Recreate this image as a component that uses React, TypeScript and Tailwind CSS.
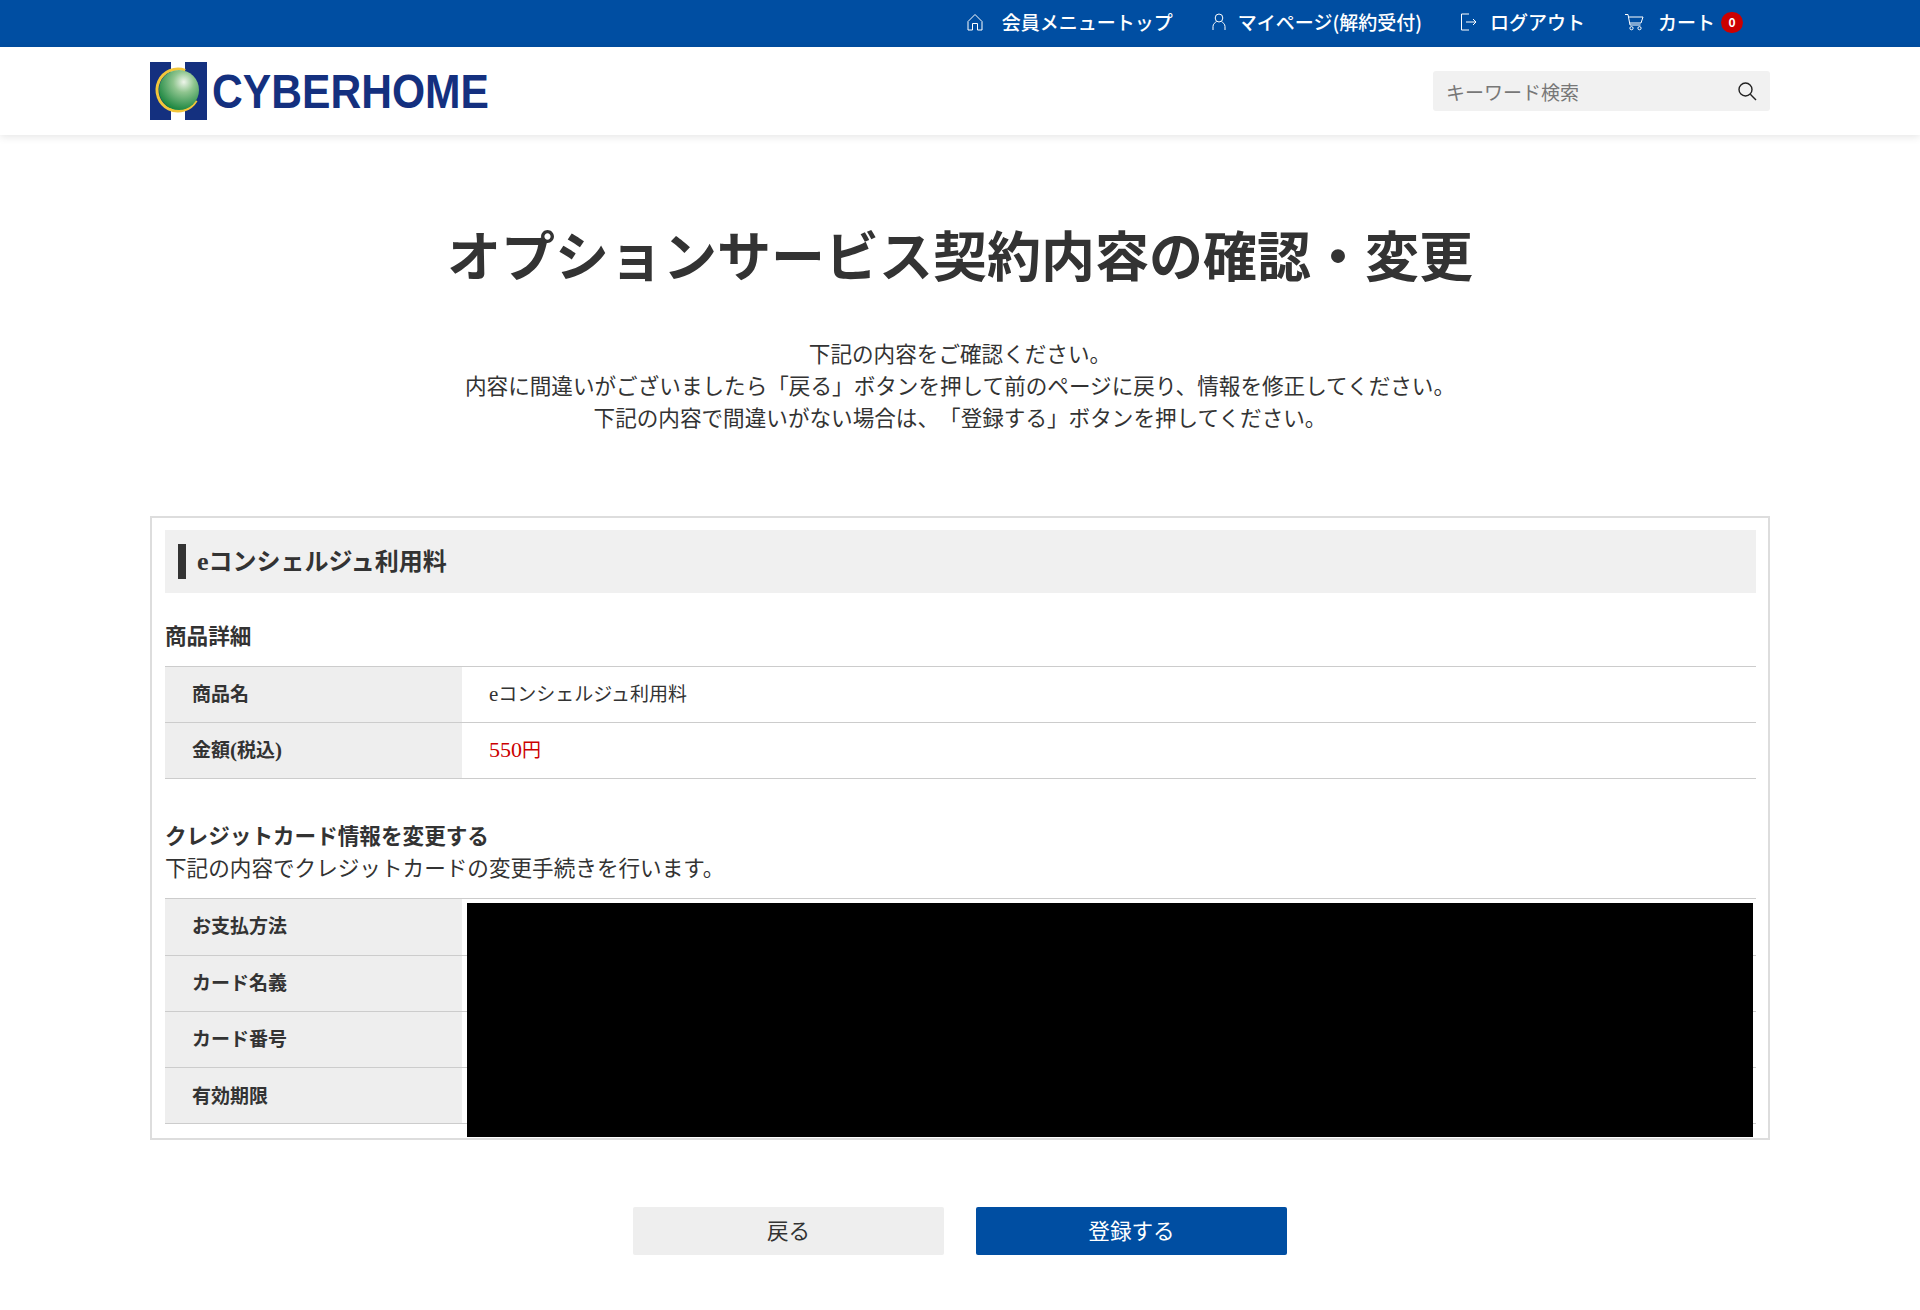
import { FC, ReactNode } from 'react';

const navIconClass = 'shrink-0 fill-none stroke-white stroke-[1]';

const HomeIcon = () => (
  <svg className={navIconClass} width="16" height="18" viewBox="0 0 16 18">
    <path d="M1 8.5 8 1.5l7 7V17h-4.5v-6.5h-5V17H1z" />
  </svg>
);

const UserIcon = () => (
  <svg className={navIconClass} width="14" height="18" viewBox="0 0 14 18">
    <ellipse cx="7" cy="5" rx="3.8" ry="4" />
    <path d="M1 17v-3.5C1 11 3 9.6 4.5 8.6M13 17v-3.5c0-2.5-2-3.9-3.5-4.9" />
  </svg>
);

const LogoutIcon = () => (
  <svg className={navIconClass} width="17" height="18" viewBox="0 0 17 18">
    <path d="M9 1H1.5v16H9M6 9h10M13 6l3 3-3 3" />
  </svg>
);

const CartIcon = () => (
  <svg className={navIconClass} width="20" height="18" viewBox="0 0 20 18">
    <path d="M1 1.5h3l2 10.5h10.5M4.5 4H19l-2 6H5.7" />
    <circle cx="7.5" cy="15.2" r="1.6" />
    <circle cx="15.5" cy="15.2" r="1.6" />
  </svg>
);

const Logo = () => (
  <svg className="overflow-visible" width="339" height="58" viewBox="0 0 339 58" role="img" aria-label="CYBERHOME">
    <defs>
      <radialGradient id="ball" cx="0.62" cy="0.3" r="0.75">
        <stop offset="0" stopColor="#eef5ea" />
        <stop offset="0.35" stopColor="#8fc58f" />
        <stop offset="1" stopColor="#12813a" />
      </radialGradient>
    </defs>
    <path d="M0 0h21v14h14V0h22v58H35V44H21v14H0z" fill="#14307f" />
    <path d="M35.2 8.3A21 21 0 1 0 46.2 38.5" fill="none" stroke="#f3c63a" strokeWidth="3" />
    <circle cx="29" cy="28" r="20" fill="url(#ball)" />
    <text
      x="62"
      y="46"
      textLength="277"
      lengthAdjust="spacingAndGlyphs"
      fontFamily="'Liberation Sans', sans-serif"
      fontWeight="700"
      fontSize="49"
      fill="#14307f"
    >
      CYBERHOME
    </text>
  </svg>
);

const NavItem: FC<{ icon: ReactNode; label: string; gap: string; className?: string }> = ({
  icon,
  label,
  gap,
  className,
}) => (
  <a className={`flex items-center ${gap} ${className ?? ''}`}>
    {icon}
    <span>{label}</span>
  </a>
);

const Row: FC<{ label: ReactNode; height?: string; children?: ReactNode }> = ({
  label,
  height = 'h-14',
  children,
}) => (
  <div className={`flex border-b border-[#cccccc] ${height}`}>
    <div className="flex w-[297px] shrink-0 items-center bg-[#eeeeee] pl-[27px] text-[19px] font-bold">{label}</div>
    <div className="flex flex-1 items-center pl-[27px] text-[19px]">{children}</div>
  </div>
);

export default function App() {
  return (
    <div className="min-h-[1310px] bg-white text-[21.6px] leading-[32px] text-[#333333] [text-spacing-trim:space-all] [font-family:'Liberation_Serif','Noto_Sans_CJK_JP',serif]">
      <div className="flex h-[47px] items-center justify-end bg-[#004ea2] pb-[3px] pr-[177px] text-[19px] font-medium text-white [font-family:'Noto_Sans_CJK_JP',sans-serif]">
        <NavItem icon={<HomeIcon />} label="会員メニュートップ" gap="gap-[19px]" className="mr-[39px]" />
        <NavItem icon={<UserIcon />} label="マイページ(解約受付)" gap="gap-3" className="mr-[38px]" />
        <NavItem icon={<LogoutIcon />} label="ログアウト" gap="gap-[13px]" className="mr-[39px]" />
        <NavItem icon={<CartIcon />} label="カート" gap="gap-[14px]" />
        <span className="ml-1.5 flex h-[21px] w-[22px] items-center justify-center rounded-full bg-[#cc0000] text-[12px] font-bold leading-none">
          0
        </span>
      </div>

      <header className="relative flex h-[88px] items-center justify-between px-[150px] shadow-[0_2px_8px_rgba(0,0,0,0.1)]">
        <Logo />
        <div className="flex h-10 w-[337px] items-center justify-between rounded-[3px] bg-[#f1f1f1] pl-[13px] pr-[13px] [font-family:'Noto_Sans_CJK_JP',sans-serif]">
          <span className="pt-px text-[19px] text-[#777777]">キーワード検索</span>
          <svg className="fill-none stroke-[#222222] stroke-[1.4]" width="20" height="20" viewBox="0 0 20 20">
            <circle cx="8.5" cy="8.5" r="6.5" />
            <path d="m13.3 13.3 5.7 5.7" />
          </svg>
        </div>
      </header>

      <main className="px-[150px] [font-family:'Noto_Sans_CJK_JP',sans-serif]">
        <h1 className="mt-[80px] text-center text-[54px] font-bold leading-[78px]">
          オプションサービス契約内容の確認・変更
        </h1>
        <div className="mt-[44px] text-center">
          <p>下記の内容をご確認ください。</p>
          <p>内容に間違いがございましたら「戻る」ボタンを押して前のページに戻り、情報を修正してください。</p>
          <p>下記の内容で間違いがない場合は、「登録する」ボタンを押してください。</p>
        </div>

        <section className="mt-[83px] h-[624px] border-2 border-[#dddddd] pl-[13px] pr-3 pt-3 [font-family:'Liberation_Serif','Noto_Sans_CJK_JP',serif]">
          <h2 className="flex h-[63px] items-center bg-[#f0f0f0] pl-[13px] text-[24px] font-bold">
            <span className="mr-[11px] h-[35px] w-2 bg-[#333333]" />
            <span>
              <span className="text-[26px]">e</span>コンシェルジュ利用料
            </span>
          </h2>
          <h3 className="mt-[28px] text-[21.6px] font-bold leading-[32px]">商品詳細</h3>
          <div className="mt-[13px] border-t border-[#cccccc]">
            <Row label="商品名">
              <span>
                <span className="text-[21px]">e</span>コンシェルジュ利用料
              </span>
            </Row>
            <Row
              label={
                <span>
                  金額<span className="text-[21px]">(</span>税込<span className="text-[21px]">)</span>
                </span>
              }
            >
              <span className="text-[#cc0000]">
                <span className="text-[22px]">550</span>円
              </span>
            </Row>
          </div>
          <h3 className="mt-[42px] text-[21.6px] font-bold leading-[32px]">クレジットカード情報を変更する</h3>
          <p className="-mt-0.5 [font-family:'Noto_Sans_CJK_JP',sans-serif]">
            下記の内容でクレジットカードの変更手続きを行います。
          </p>
          <div className="relative mt-[15px] border-t border-[#cccccc]">
            <Row label="お支払方法" height="h-[57px]" />
            <Row label="カード名義" />
            <Row label="カード番号" />
            <Row label={<span className="relative top-px">有効期限</span>} />
            <div className="absolute right-[3px] top-1 h-[234px] w-[1286px] bg-black" />
          </div>
        </section>

        <div className="mt-[67px] flex justify-center gap-8">
          <button className="h-12 w-[311px] rounded-[2px] bg-[#eeeeee] pb-0.5">戻る</button>
          <button className="h-12 w-[311px] rounded-[2px] bg-[#004ea2] pb-0.5 text-white">登録する</button>
        </div>
      </main>
    </div>
  );
}
